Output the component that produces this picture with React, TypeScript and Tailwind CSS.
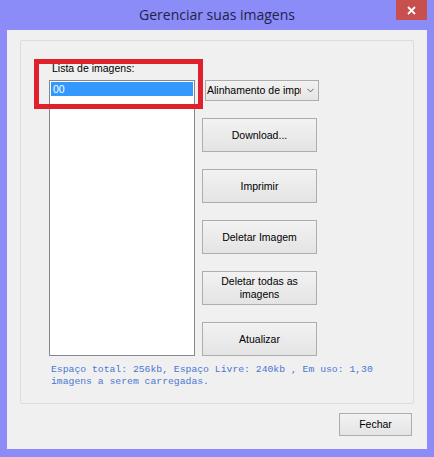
import { ChevronDown } from 'lucide-react';

const sans = { fontFamily: '"Liberation Sans", Arial, sans-serif' };

function WinButton({ label, className = '' }: { label: React.ReactNode; className?: string }) {
  return (
    <button
      className={`flex items-center justify-center text-center border border-[#adadad] bg-gradient-to-b from-[#f2f2f2] to-[#e4e4e4] text-[10.5px] leading-[13px] text-[#000] ${className}`}
    >
      {label}
    </button>
  );
}

export default function App() {
  const actions: React.ReactNode[] = [
    'Download...',
    'Imprimir',
    'Deletar Imagem',
    <>Deletar todas as<br />imagens</>,
    'Atualizar',
  ];

  return (
    <div className="w-[434px] h-[457px] bg-[#8b8cf7] flex flex-col px-[7px] pb-[8px]" style={sans}>
      {/* title bar */}
      <div className="relative h-[30px] flex items-center justify-center shrink-0">
        <span
          className="text-[14px] text-[#22224a] pb-[1px]"
          style={{ fontFamily: '"Open Sans", "Liberation Sans", sans-serif' }}
        >
          Gerenciar suas imagens
        </span>
        <div className="absolute right-[0px] top-0 w-[31px] h-[20px] bg-[#c7504f] flex items-center justify-center">
          <svg width="9" height="9" viewBox="0 0 9 9">
            <path d="M1 1 L8 8 M8 1 L1 8" stroke="#fff" strokeWidth="1.8" />
          </svg>
        </div>
      </div>

      {/* client area */}
      <div className="flex-1 bg-[#f0f0f0] flex flex-col">
        <div className="relative ml-[13px] mt-[10px] w-[394px] h-[364px] border border-[#d6dde3] rounded-[2px] pl-[28px] pt-[21px]">
          <div className="flex gap-[7px]">
            <div className="flex flex-col w-[146px]">
              <div className="h-[13px] text-[10.5px] leading-[13px] pl-[3px] text-[#000]">Lista de imagens:</div>
              <div className="mt-[5px] h-[276px] bg-white border border-[#828790] p-px">
                <div className="h-[14px] bg-[#3399ff] text-white text-[10.5px] leading-[14px] pl-[2px]">00</div>
              </div>
            </div>

            <div className="flex flex-col pt-[18px] w-[117px]">
              <div className="ml-[3px] h-[21px] w-[114px] border border-[#adadad] bg-gradient-to-b from-[#f2f2f2] to-[#e5e5e5] flex items-center">
                <span className="w-[95px] overflow-hidden whitespace-nowrap text-[10.5px] pl-px text-[#000]">
                  Alinhamento de impressão
                </span>
                <ChevronDown size={11} strokeWidth={2} className="ml-[4px] text-[#555]" />
              </div>
              <div className="mt-[17px] flex flex-col gap-[17px]">
                {actions.map((a, i) => (
                  <WinButton key={i} label={a} className="w-[115px] h-[34px]" />
                ))}
              </div>
            </div>
          </div>

          <div
            className="mt-[8px] ml-[2px] text-[9.75px] leading-[12px] text-[#4a76d4]"
            style={{ fontFamily: '"Liberation Mono", "Courier New", monospace' }}
          >
            Espaço total: 256kb, Espaço Livre: 240kb , Em uso: 1,30
            <br />
            imagens a serem carregadas.
          </div>

          {/* annotation highlight */}
          <div className="absolute left-[13px] top-[18px] w-[169px] h-[50px] border-[5px] border-[#e0202a]" />
        </div>

        <div className="flex justify-end pr-[15px] mt-[9px]">
          <WinButton label="Fechar" className="w-[73px] h-[23px]" />
        </div>
      </div>
    </div>
  );
}
